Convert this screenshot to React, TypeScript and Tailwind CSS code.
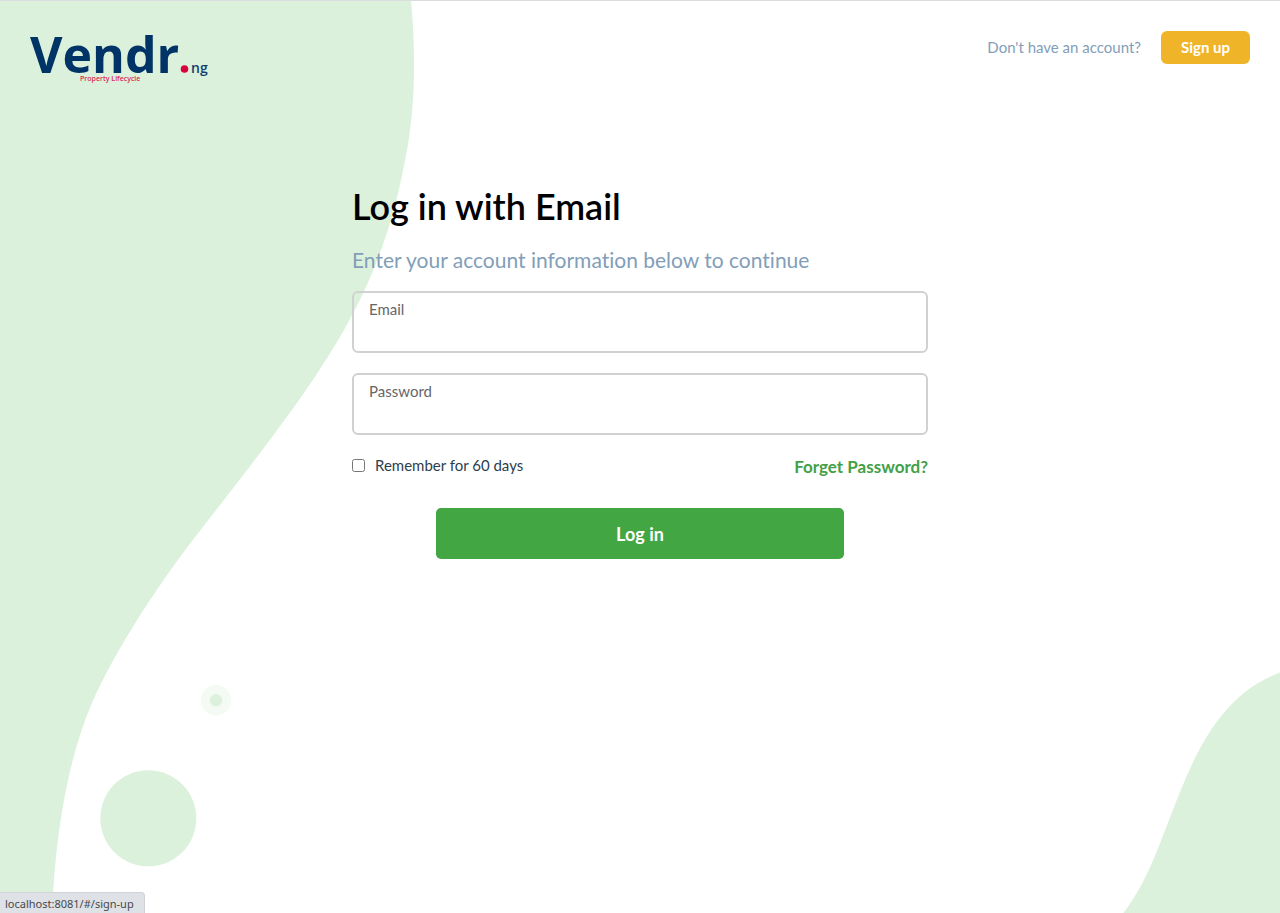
import { useState } from "react";
import type { FormEvent } from "react";

function Backdrop() {
  return (
    <svg
      className="pointer-events-none absolute inset-0 h-full w-full"
      viewBox="0 0 1280 913"
      preserveAspectRatio="xMidYMid slice"
      fill="#dbf1dc"
      aria-hidden="true"
    >
      <path d="M0 0H411C416 55 416 112 403 170C388 245 363 300 330 353C288 420 233 487 187 547C146 602 113 656 93 700C66 762 55 840 52 913H0Z" />
      <path d="M1123 913C1147 882 1158 847 1170 817C1193 757 1218 695 1280 672V913Z" />
      <circle cx="148.3" cy="817.8" r="48" />
      <circle cx="216" cy="699.8" r="15.2" fill="#f3fbf4" />
      <circle cx="216" cy="699.8" r="6.2" />
    </svg>
  );
}

function Logo() {
  return (
    <svg
      className="h-[74px] w-[184px]"
      viewBox="0 0 184 74"
      role="img"
      aria-label="Vendr.ng Property Lifecycle"
      fontFamily='"Open Sans", "Noto Sans", sans-serif'
    >
      <text x="0" y="56" fontSize="50" fontWeight="700" fill="#003366">
        Vendr
      </text>
      <circle cx="154.5" cy="52" r="3.8" fill="#d9043d" />
      <text x="161" y="56" fontSize="14" fontWeight="600" fill="#123f6d">
        ng
      </text>
      <text x="50" y="64" fontSize="7" fontWeight="600" fill="#dc2a54">
        Property Lifecycle
      </text>
    </svg>
  );
}

type FieldProps = {
  id: string;
  label: string;
  type: string;
  value: string;
  onChange: (value: string) => void;
};

function Field({ id, label, type, value, onChange }: FieldProps) {
  return (
    <div className="flex h-[62px] flex-col rounded-md border-2 border-[#d1d1d1] px-[15px] pt-1.5">
      <label htmlFor={id} className="text-[15px] leading-5 text-[#666666]">
        {label}
      </label>
      <input
        id={id}
        type={type}
        value={value}
        onChange={(e) => onChange(e.target.value)}
        className="w-full flex-1 bg-transparent text-[15px] text-black outline-none"
      />
    </div>
  );
}

export default function App() {
  const [email, setEmail] = useState("");
  const [password, setPassword] = useState("");
  const submit = (e: FormEvent) => e.preventDefault();

  return (
    <div className="relative flex min-h-screen flex-col border-t border-[#dadce0] bg-white font-['Lato','Open_Sans',sans-serif] [font-variant-ligatures:none]">
      <Backdrop />
      <header className="relative flex items-start justify-between px-[30px] pt-4">
        <a href="#/">
          <Logo />
        </a>
        <div className="flex items-center gap-5 pt-3.5">
          <span className="text-[15px] text-[#829eb8]">Don't have an account?</span>
          <a
            href="#/sign-up"
            className="flex h-[33px] w-[89px] items-center justify-center rounded-md bg-[#f0b429] text-[15px] font-bold text-white"
          >
            Sign up
          </a>
        </div>
      </header>

      <main className="relative mx-auto w-[45%] min-w-80 flex-1 pt-[88px]">
        <h1 className="text-4xl leading-[54px] font-semibold text-black">Log in with Email</h1>
        <p className="mt-3 text-[21px] leading-[30px] text-[#829eb8]">
          Enter your account information below to continue
        </p>
        <form onSubmit={submit} className="mt-4 flex flex-col gap-5">
          <Field id="email" label="Email" type="email" value={email} onChange={setEmail} />
          <Field
            id="password"
            label="Password"
            type="password"
            value={password}
            onChange={setPassword}
          />
          <div className="flex items-start justify-between">
            <label className="flex items-center gap-2.5 text-[15px] leading-5 text-[#2c3e50]">
              <input type="checkbox" className="size-[13px]" />
              Remember for 60 days
            </label>
            <a href="#/forgot" className="text-[17px] leading-6 font-bold text-[#43a047]">
              Forget Password?
            </a>
          </div>
          <button
            type="submit"
            className="mx-auto mt-[9px] h-[51px] w-[71%] rounded-[5px] bg-[#42a642] text-lg font-bold text-white"
          >
            Log in
          </button>
        </form>
      </main>

      <div className="absolute bottom-0 left-0 flex h-[21px] w-[145px] items-center rounded-tr border-t border-r border-[#cfd2d6] bg-[#dee1e6] px-[5px] pt-0.5 font-['Noto_Sans','Open_Sans',sans-serif] text-[11px] whitespace-nowrap text-[#46494d]">
        localhost:8081/#/sign-up
      </div>
    </div>
  );
}
